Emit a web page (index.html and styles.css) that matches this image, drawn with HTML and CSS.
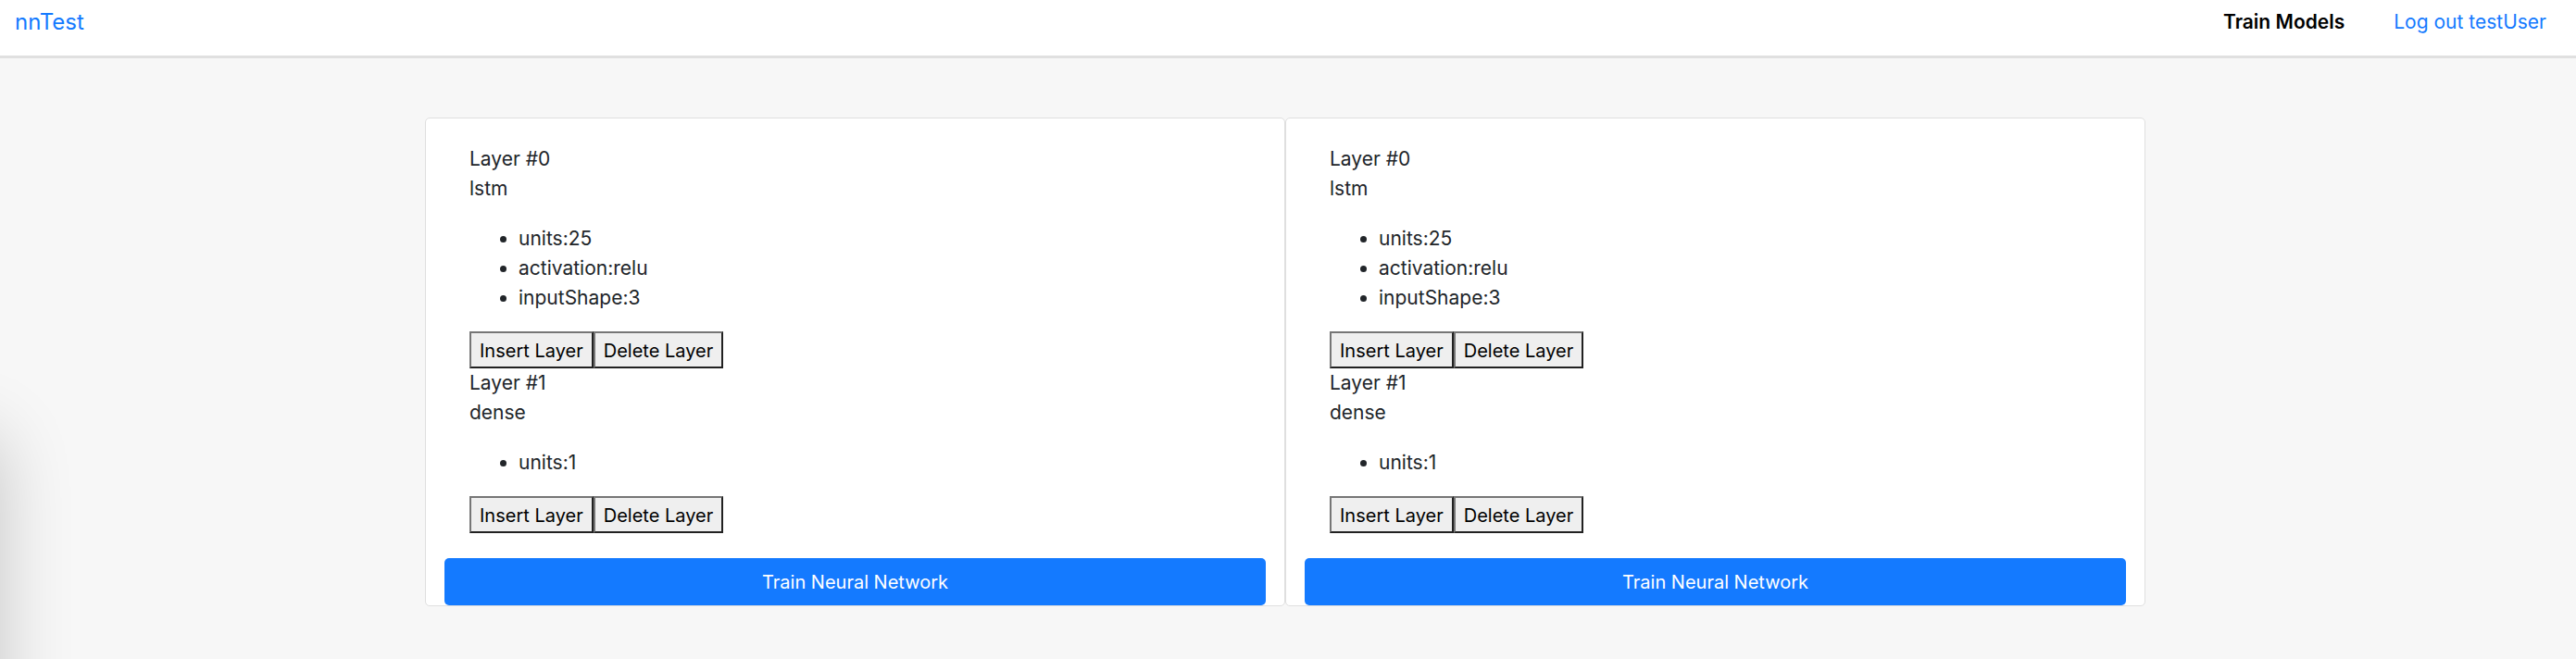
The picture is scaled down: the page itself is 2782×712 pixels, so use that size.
FILE: index.html
```html
<!DOCTYPE html>
<html lang="en">
<head>
<meta charset="utf-8">
<title>nnTest</title>
<link rel="stylesheet" href="styles.css">
</head>
<body>
<header class="navbar">
  <a class="brand" href="#">nnTest</a>
  <nav class="nav">
    <a class="nav-link active" href="#">Train Models</a>
    <a class="nav-link" href="#">Log out testUser</a>
  </nav>
</header>
<main class="board">
  <section class="card">
    <div class="layers">
      <div class="layer">
        <div>Layer #0</div>
        <div>lstm</div>
        <ul class="params"><li>units:25</li><li>activation:relu</li><li>inputShape:3</li></ul>
        <div class="actions"><button class="tool" type="button">Insert Layer</button><button class="tool" type="button">Delete Layer</button></div>
      </div>
      <div class="layer">
        <div>Layer #1</div>
        <div>dense</div>
        <ul class="params"><li>units:1</li></ul>
        <div class="actions"><button class="tool" type="button">Insert Layer</button><button class="tool" type="button">Delete Layer</button></div>
      </div>
    </div>
    <button class="train" type="button">Train Neural Network</button>
  </section>
  <section class="card">
    <div class="layers">
      <div class="layer">
        <div>Layer #0</div>
        <div>lstm</div>
        <ul class="params"><li>units:25</li><li>activation:relu</li><li>inputShape:3</li></ul>
        <div class="actions"><button class="tool" type="button">Insert Layer</button><button class="tool" type="button">Delete Layer</button></div>
      </div>
      <div class="layer">
        <div>Layer #1</div>
        <div>dense</div>
        <ul class="params"><li>units:1</li></ul>
        <div class="actions"><button class="tool" type="button">Insert Layer</button><button class="tool" type="button">Delete Layer</button></div>
      </div>
    </div>
    <button class="train" type="button">Train Neural Network</button>
  </section>
</main>
<div class="edge-shadow"></div>
</body>
</html>
```

FILE: styles.css
```css
* { box-sizing: border-box; }

body {
  margin: 0;
  min-height: 100vh;
  overflow-x: hidden;
  background: #f7f7f7;
  color: #212529;
  font: 21px/32px Inter, "Liberation Sans", sans-serif;
}

button {
  font: inherit;
  font-size: 20px;
}

a {
  color: #147aff;
  text-decoration: none;
}

.navbar {
  display: flex;
  justify-content: space-between;
  padding: 8px 32px 20px 16px;
  background: #fff;
  border-bottom: 3px solid #e0e0e0;
}

.brand { font-size: 24px; }

.nav {
  display: flex;
  gap: 53px;
}

.nav-link.active {
  color: #000;
  font-weight: 600;
}

.board {
  display: grid;
  grid-template-columns: 459fr 929fr 929fr 465fr;
  padding-top: 64px;
}

.card {
  padding: 28px 20px 0;
  background: #fff;
  border: 1px solid #dfdfdf;
  border-radius: 5px;
}

.card:first-child { grid-column: 2; }

.layers { padding: 0 27px 27px; }

.params {
  margin: 22px 0 20px;
  padding-left: 53px;
}

.actions { display: flex; }

.tool {
  padding: 3px 9px 1px;
  background: #efefef;
  border: 2px solid;
  border-color: #767676 #212121 #212121 #767676;
  color: #000;
}

.train {
  display: block;
  width: 100%;
  padding: 10px 16px 9px;
  background: #147aff;
  border: 0;
  border-radius: 5px;
  color: #fff;
}

.edge-shadow {
  position: fixed;
  top: 470px;
  bottom: -120px;
  left: -100px;
  width: 100px;
  border-radius: 20px;
  box-shadow: 0 0 80px rgba(0, 0, 0, 0.2);
  pointer-events: none;
}
```
